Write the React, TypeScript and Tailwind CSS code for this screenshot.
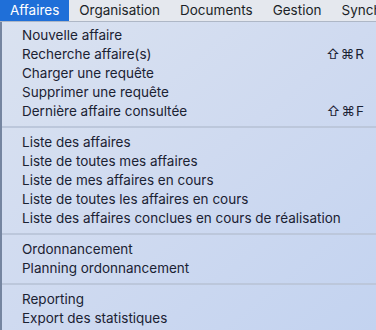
import React from 'react';

type Item = { label: string; shortcut?: string };

const SECTIONS: Item[][] = [
  [
    { label: 'Nouvelle affaire' },
    { label: 'Recherche affaire(s)', shortcut: '⇧⌘R' },
    { label: 'Charger une requête' },
    { label: 'Supprimer une requête' },
    { label: 'Dernière affaire consultée', shortcut: '⇧⌘F' },
  ],
  [
    { label: 'Liste des affaires' },
    { label: 'Liste de toutes mes affaires' },
    { label: 'Liste de mes affaires en cours' },
    { label: 'Liste de toutes les affaires en cours' },
    { label: 'Liste des affaires conclues en cours de réalisation' },
  ],
  [{ label: 'Ordonnancement' }, { label: 'Planning ordonnancement' }],
  [{ label: 'Reporting' }, { label: 'Export des statistiques' }],
];

const MENUS = ['Affaires', 'Organisation', 'Documents', 'Gestion', 'Synchro'];

const App: React.FC = () => {
  return (
    <div
      className="w-[376px] h-[330px] overflow-hidden flex flex-col text-[#1b2233]"
      style={{ fontFamily: 'Inter, "DejaVu Sans", sans-serif' }}
    >
      {/* Menu bar */}
      <div className="h-[22px] shrink-0 flex overflow-hidden bg-[#e5e8ee] border-b border-[#aeb7c6] whitespace-nowrap">
        {MENUS.map((m, i) => (
          <div
            key={m}
            className={`h-full flex items-center px-[10px] text-[13.5px] ${
              i === 0 ? 'bg-[#1f6fd8] text-white' : 'text-[#1b1f27]'
            }`}
          >
            {m}
          </div>
        ))}
      </div>

      {/* Dropdown */}
      <div className="flex-1 flex bg-linear-to-br from-[#dae2f0] via-[#cfdaf0] to-[#c3d3f0]">
        <div className="w-[2px] bg-[#7585a0]" />
        <div className="flex-1 pt-[4px]">
          {SECTIONS.map((section, si) => (
            <div key={si}>
              {si > 0 && (
                <div className="h-[12px] flex items-center">
                  <div className="w-full h-[2px] bg-[#bcc7db]" />
                </div>
              )}
              {section.map((item) => (
                <div
                  key={item.label}
                  className="h-[19px] flex items-center justify-between pl-[20px] pr-[11px] text-[13.5px] whitespace-nowrap"
                >
                  <span>{item.label}</span>
                  {item.shortcut && (
                    <span className="tracking-[1px]">{item.shortcut}</span>
                  )}
                </div>
              ))}
            </div>
          ))}
        </div>
      </div>
    </div>
  );
};

export default App;
